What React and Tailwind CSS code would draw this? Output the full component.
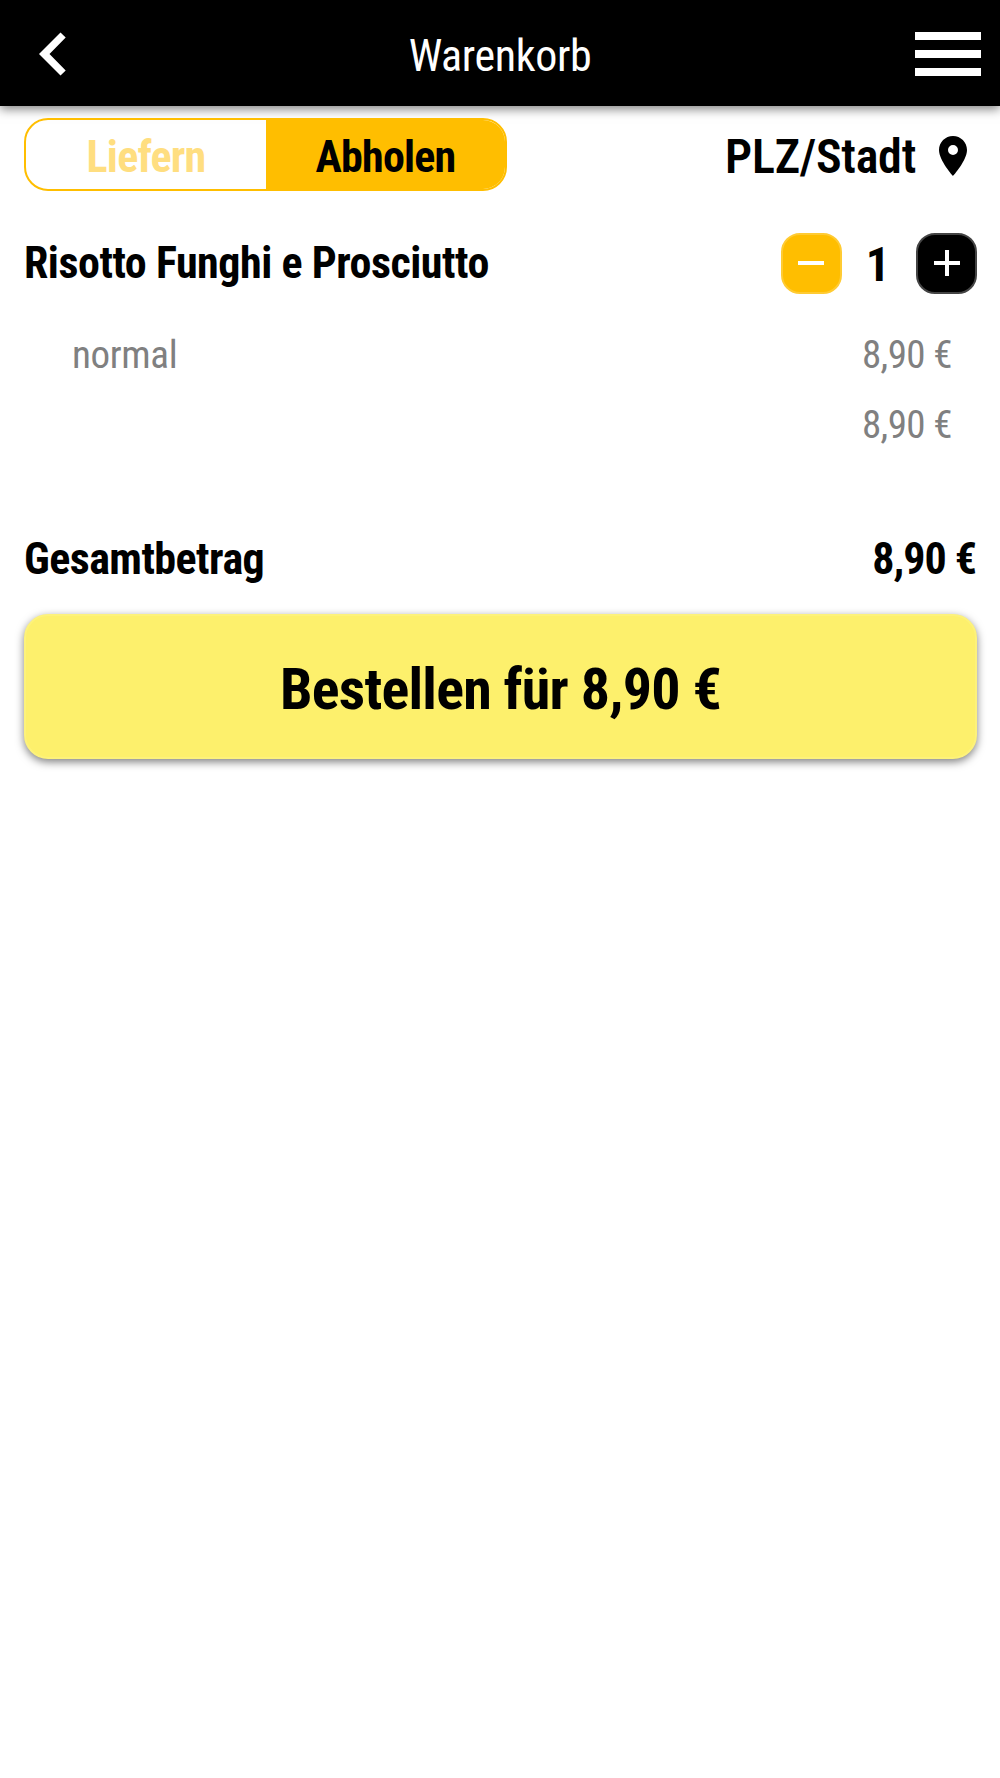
import { useState } from "react";

const PRICE = "8,90 €";

const App = () => {
  const [mode, setMode] = useState("pickup");
  const [count, setCount] = useState(1);

  return (
    <div className="min-h-[1778px] bg-white text-black font-['Roboto_Condensed','Roboto',sans-serif] font-stretch-condensed">
      {/* HEADER */}
      <header className="h-[106px] bg-black text-white flex items-center justify-between px-[19px] shadow-[0_3px_10px_rgba(0,0,0,0.5)]">
        <button className="w-[66px] pl-5" aria-label="back">
          <svg width="27" height="44" viewBox="0 0 27 44" className="mt-0.5">
            <path d="M0 22 21.5 .5 26.7 5.5 10.5 22 26.7 38.5 21.5 43.5Z" fill="#fff" />
          </svg>
        </button>

        <h1 className="text-[44px] leading-none tracking-[-0.35px] mt-[5px]">Warenkorb</h1>

        <button className="flex flex-col gap-2.5 w-[66px] mt-0.5" aria-label="menu">
          <span className="h-2 w-full bg-white" />
          <span className="h-2 w-full bg-white" />
          <span className="h-2 w-full bg-white" />
        </button>
      </header>

      <main className="px-6">
        {/* DELIVERY MODE */}
        <div className="mt-3 h-[73px] flex items-center justify-between">
          <div className="h-full w-[483px] flex rounded-[24px] border-2 border-[#ffbe00] overflow-hidden text-[44px] tracking-[-0.8px] font-bold">
            <button
              onClick={() => setMode("delivery")}
              className={`w-[240px] pt-1 ${mode === "delivery" ? "bg-[#ffbe00]" : "text-[#ffde80]"}`}
            >
              Liefern
            </button>
            <button
              onClick={() => setMode("pickup")}
              className={`flex-1 pt-1 ${mode === "pickup" ? "bg-[#ffbe00]" : "text-[#ffde80]"}`}
            >
              Abholen
            </button>
          </div>

          <div className="flex items-center gap-[13px] mr-[-1px]">
            <span className="text-[48px] leading-none tracking-[-0.25px] font-semibold mt-1">PLZ/Stadt</span>
            <svg width="48" height="48" viewBox="0 0 24 24" className="mt-0.5">
              <path d="M12 2C8.13 2 5 5.13 5 9c0 5.25 7 13 7 13s7-7.75 7-13c0-3.87-3.13-7-7-7zm0 9.5a2.5 2.5 0 0 1 0-5 2.5 2.5 0 0 1 0 5z" />
            </svg>
          </div>
        </div>

        {/* CART ITEM */}
        <div className="mt-[42px] h-[61px] flex items-center justify-between">
          <h2 className="text-[44px] leading-none tracking-[-0.47px] font-bold mb-0.5">Risotto Funghi e Prosciutto</h2>

          <div className="flex items-center mr-[-1px]">
            <button
              onClick={() => setCount(Math.max(0, count - 1))}
              className="size-[61px] rounded-[19px] bg-[#ffbe00] border-2 border-[#ffcb33] flex items-center justify-center pr-px pb-px"
              aria-label="minus"
            >
              <span className="h-1 w-[26px] bg-white" />
            </button>
            <span className="w-[74px] pr-0.5 text-center text-[48px] leading-none font-bold mt-[3px]">{count}</span>
            <button
              onClick={() => setCount(count + 1)}
              className="size-[61px] rounded-[19px] bg-black border-2 border-[#444] flex items-center justify-center pb-px"
              aria-label="plus"
            >
              <svg width="26" height="26" viewBox="0 0 26 26">
                <path d="M0 13h26M13 0v26" stroke="#fff" strokeWidth="4" />
              </svg>
            </button>
          </div>
        </div>

        <div className="mt-[26px] pl-12 pr-6 text-[39px] leading-[70px] text-[#808080]">
          <div className="flex justify-between">
            <span className="tracking-[-0.35px]">normal</span>
            <span className="tracking-[-0.6px]">{PRICE}</span>
          </div>
          <div className="text-right tracking-[-0.6px]">{PRICE}</div>
        </div>

        {/* TOTAL */}
        <div className="mt-[54px] h-[90px] flex items-center justify-between text-[44px] leading-none font-bold">
          <span className="tracking-[-0.55px]">Gesamtbetrag</span>
          <span className="tracking-[-1px]">{PRICE}</span>
        </div>

        <button className="mt-[10px] h-[145px] w-[953px] pt-1.5 rounded-[24px] bg-[#fdf06c] border-2 border-[#fdf27b] text-[58px] tracking-[-0.75px] font-bold shadow-[0_3px_8px_rgba(0,0,0,0.5)]">
          Bestellen für {PRICE}
        </button>
      </main>
    </div>
  );
};

export default App;
